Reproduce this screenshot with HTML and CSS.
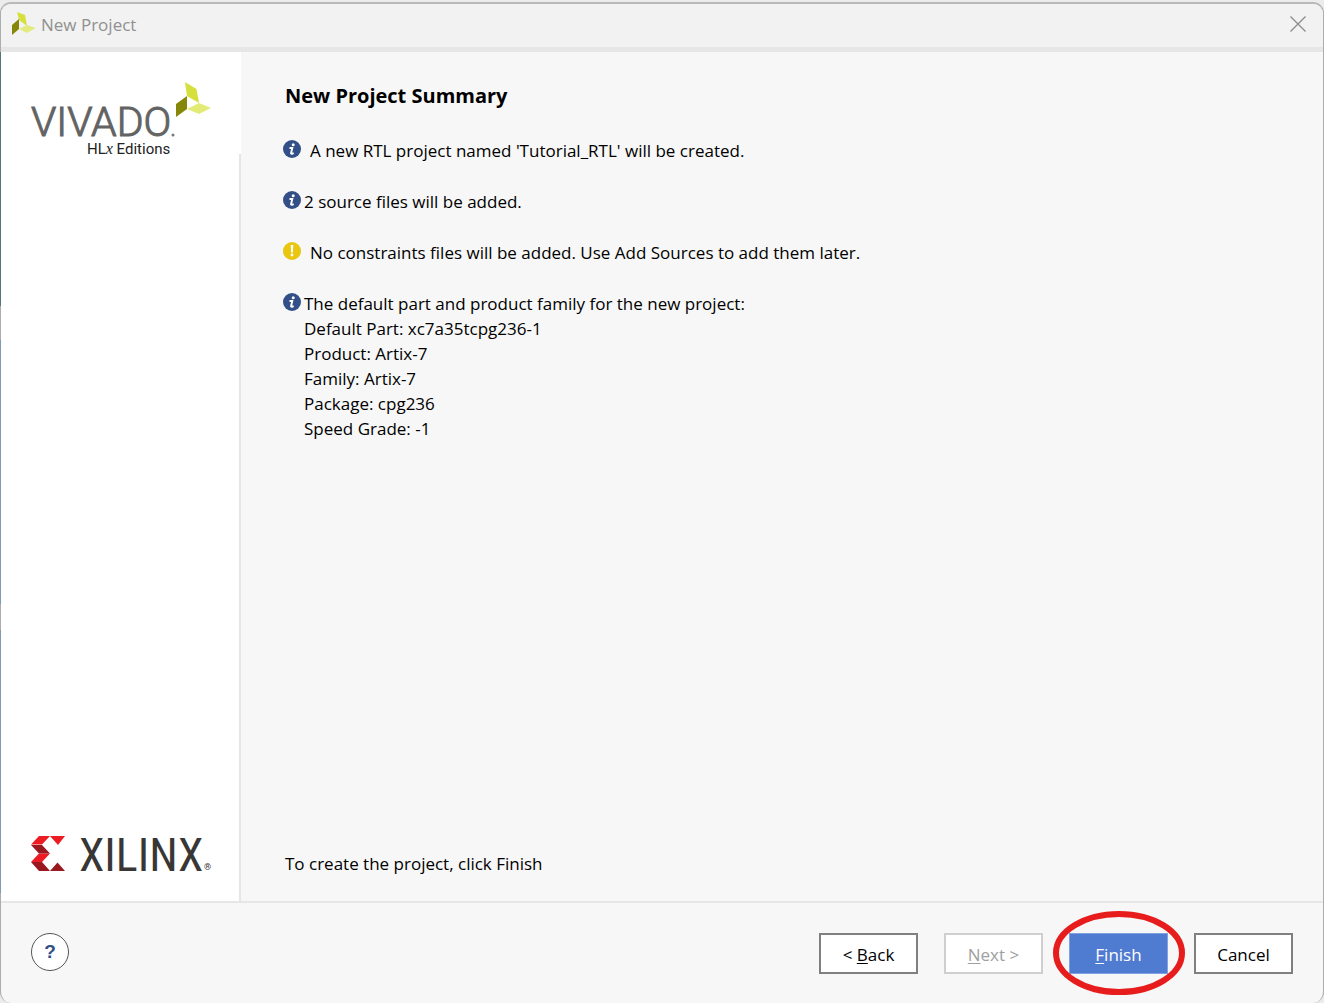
FILE: index.html
```html
<!DOCTYPE html>
<html lang="en">
<head>
<meta charset="utf-8">
<title>New Project</title>
<link rel="stylesheet" href="styles.css">
</head>
<body>
<div class="dialog">
  <header class="titlebar">
    <svg class="app-icon" width="24" height="24" viewBox="0 0 24 24" aria-hidden="true">
      <path fill="#d6e03d" d="M6 0l8 3 2 11-8-6z"/>
      <path fill="#868608" d="M1 13l7-6v10l-7 6z"/>
      <path fill="#e3eb80" d="M8 17l8-4 9 3-9 5z"/>
    </svg>
    <span class="titlebar-text">New Project</span>
    <button class="close" type="button" aria-label="Close">
      <svg width="16" height="16" viewBox="0 0 16 16" fill="none" stroke="#8c8c8c" stroke-width="1.3"><path d="M.5.5l15 15M15.500.5l-15 15"/></svg>
    </button>
  </header>
  <div class="body">
    <aside class="sidebar">
      <div class="brand">
        <svg width="182" height="76" viewBox="0 0 182 76" role="img" aria-label="Vivado HLx Editions">
          <path fill="#d6e03d" d="M154 0l11.500 7 2.500 14-12-7z"/>
          <path fill="#868608" d="M145 22l11-8v13l-11 8z"/>
          <path fill="#e3eb77" d="M156 27l12-6 12 5-12 6z"/>
          <text class="logo-vivado" x="0" y="54">VIVADO</text>
          <circle cx="142" cy="53" r="1.500" fill="#777"/>
          <text class="logo-edition" x="56" y="72">HL<tspan class="logo-x">x</tspan> Editions</text>
        </svg>
      </div>
      <div class="vendor">
        <svg class="vendor-logo" width="184" height="40" viewBox="0 0 184 40" role="img" aria-label="Xilinx">
          <path fill="#ed1c24" d="M8 1h11l-8 8.500H0zM19 1h15l-7 9zM0 27l8-8.500h11l-8 8.500z"/>
          <path fill="#9a1820" d="M0 10h11l8 8.500H8zM0 27h11l8 9H8zM19 36l7.500-8.500 7.500 8.500z"/>
          <text class="logo-xilinx" x="48" y="36">XILINX</text>
          <text class="logo-reg" x="173" y="35">®</text>
        </svg>
      </div>
    </aside>
    <main class="content">
      <h1 class="heading">New Project Summary</h1>
      <ul class="summary">
        <li class="item item-wide">
          <svg class="badge" width="18" height="18" viewBox="0 0 18 18" aria-hidden="true"><use href="#info"/></svg>
          <p>A new RTL project named 'Tutorial_RTL' will be created.</p>
        </li>
        <li class="item">
          <svg class="badge" width="18" height="18" viewBox="0 0 18 18" aria-hidden="true"><use href="#info"/></svg>
          <p>2 source files will be added.</p>
        </li>
        <li class="item item-wide">
          <svg class="badge" width="18" height="18" viewBox="0 0 18 18" aria-hidden="true"><circle cx="9" cy="9" r="9" fill="#e9c60f"/><path fill="#fff" d="M7.700 3h2.600l-.4 7.500H8.100z"/><circle cx="9" cy="13" r="1.400" fill="#fff"/></svg>
          <p>No constraints files will be added. Use Add Sources to add them later.</p>
        </li>
        <li class="item">
          <svg class="badge" width="18" height="18" viewBox="0 0 18 18" aria-hidden="true"><g id="info"><circle cx="9" cy="9" r="9" fill="#324f87"/><circle cx="10.200" cy="4.800" r="1.500" fill="#fff"/><path fill="none" stroke="#fff" stroke-width="1.900" d="M6.500 8h2.800l-1.200 5q-.2 1 .8.800l1.800-.7"/></g></svg>
          <p>The default part and product family for the new project:<br>Default Part: xc7a35tcpg236-1<br>Product: Artix-7<br>Family: Artix-7<br>Package: cpg236<br>Speed Grade: -1</p>
        </li>
      </ul>
      <p class="hint">To create the project, click Finish</p>
    </main>
  </div>
  <footer class="footer">
    <button class="help" type="button" aria-label="Help">?</button>
    <div class="actions">
      <button class="btn" type="button">&lt; <u>B</u>ack</button>
      <button class="btn" type="button" disabled><u>N</u>ext &gt;</button>
      <div class="marked">
        <button class="btn btn-primary" type="button"><u>F</u>inish</button>
        <svg class="ring" width="132" height="86" viewBox="0 0 132 86" aria-hidden="true"><ellipse cx="66" cy="43" rx="63" ry="39" fill="none" stroke="#e71c1c" stroke-width="6"/></svg>
      </div>
      <button class="btn" type="button">Cancel</button>
    </div>
  </footer>
</div>
</body>
</html>
```
FILE: styles.css
```css
* { box-sizing: border-box; }
body {
  margin: 0;
  background: #ececec;
  font-family: "Open Sans", "Noto Sans", sans-serif;
  font-size: 17px;
  line-height: 25px;
  color: #000;
}
h1, p, ul { margin: 0; padding: 0; }
button { font: inherit; padding: 0; }
.dialog {
  display: flex;
  flex-direction: column;
  min-height: calc(100vh - 2px);
  margin-top: 2px;
  border: 1px solid #adadad;
  border-top: 2px solid #b9b9b9;
  border-bottom: 0;
  border-radius: 11px;
  background: #f7f7f7;
}
.titlebar {
  display: flex;
  align-items: center;
  gap: 6px;
  height: 48px;
  padding: 0 17px 3px 10px;
  border-bottom: 5px solid #e6e6e6;
  border-radius: 10px 10px 0 0;
  background: #f2f2f2;
  color: #909090;
}
.titlebar-text { flex: 1; }
.close { display: flex; border: 0; background: none; }
/* the desktop shows along the left edge of the window */
.body {
  display: flex;
  flex: 1;
  margin-left: -1px;
  border-left: 1px solid;
  border-image: linear-gradient(#52767a 30%, #adadad 30% 34%, #7f9bb0 34% 65%, #adadad 65% 68%, #7f9bb0 68% 99%, #adadad 99%) 1;
}
.sidebar {
  display: flex;
  flex-direction: column;
  justify-content: space-between;
  width: 240px;
  border-right: 2px solid #e6e6e6;
  background: #fff;
}
.brand {
  height: 102px;
  margin-right: -2px;
  padding: 30px 0 0 30px;
  background: #fff;
}
.vendor { display: flex; padding: 0 0 26px 30px; }
.vendor-logo { overflow: visible; }
.logo-vivado { font: 300 41px Roboto, sans-serif; fill: #636363; stroke: #636363; stroke-width: 1px; }
.logo-edition { font: 15px Roboto, sans-serif; fill: #222; }
.logo-x { font: italic 16px "Liberation Serif", serif; }
.logo-xilinx { font: 46px "Liberation Sans Narrow", "Roboto Condensed", "Open Sans Condensed", sans-serif; fill: #383735; }
.logo-reg { font: 9px Roboto, sans-serif; fill: #383735; }
.content {
  display: flex;
  flex-direction: column;
  flex: 1;
  padding: 31px 44px 25px;
}
.heading { font-size: 20px; line-height: 26px; font-weight: 700; }
.summary {
  display: flex;
  flex-direction: column;
  gap: 26px;
  margin: 29px 0 0 -2px;
  list-style: none;
}
.item { display: flex; gap: 3px; }
.item-wide { gap: 9px; }
.badge { flex: none; margin-top: 2px; }
.hint { margin-top: auto; }
.footer {
  display: flex;
  align-items: flex-start;
  justify-content: space-between;
  height: 102px;
  padding: 30px 30px 0 30px;
  border-top: 2px solid #e6e6e6;
}
.help {
  width: 38px;
  height: 38px;
  border: 1px solid #555;
  border-radius: 50%;
  background: #fff;
  color: #324f87;
  font: 700 19px "Liberation Sans", sans-serif;
}
.actions { display: flex; gap: 26px; }
.btn {
  width: 99px;
  height: 41px;
  padding-top: 1px;
  border: 2px solid #808080;
  background: #fff;
  color: #000;
}
.btn u { text-underline-offset: 2px; text-decoration-thickness: 1px; }
.btn:disabled { border-color: #cfcfcf; color: #a0a0a0; }
.btn-primary { border: 1px solid #7ea2e2; background: #4f7bd0; color: #fff; }
.marked { position: relative; display: flex; }
.ring { position: absolute; top: -23px; left: -16px; pointer-events: none; }
```
